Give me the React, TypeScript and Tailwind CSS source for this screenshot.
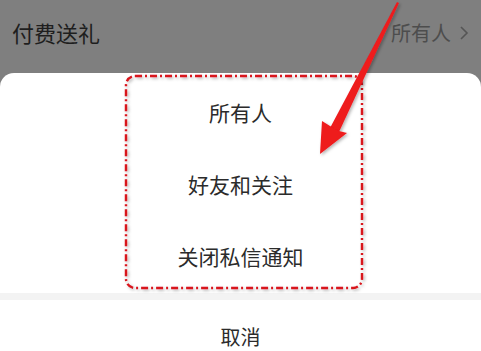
import React from 'react'

const font = { fontFamily: '"Noto Sans CJK SC", "Noto Sans", sans-serif' }

// ─── Annotation overlay: dash-dot box + arrow ───

function Annotation() {
  return (
    <svg
      className="absolute inset-0 pointer-events-none"
      width={481}
      height={351}
      viewBox="0 0 481 351"
    >
      <defs>
        <filter id="shadow" x="-20%" y="-20%" width="140%" height="140%">
          <feDropShadow dx="1.5" dy="1.5" stdDeviation="1.5" floodColor="#000" floodOpacity="0.3" />
        </filter>
      </defs>
      <rect
        x={126}
        y={76}
        width={236}
        height={212}
        rx={9}
        fill="none"
        stroke="#d8141c"
        strokeWidth={2.4}
        strokeDasharray="7 3 2 3"
        filter="url(#shadow)"
      />
      <g filter="url(#shadow)" fill="#ee1a1f">
        {/* tapered shaft */}
        <polygon points="397,2 399,3 339,132 330,128" />
        {/* head */}
        <polygon points="320,154 322,121 330,126 339,131 347,133" />
      </g>
    </svg>
  )
}

export default function App() {
  return (
    <div className="relative w-[481px] h-[351px] overflow-hidden bg-[#7f7f7f]" style={font}>
      {/* dimmed settings row */}
      <div className="h-[73px] flex items-center justify-between pl-3 pr-3 pb-2">
        <span className="text-[22px] text-[#1e1e1e]">付费送礼</span>
        <span className="flex items-center gap-2 text-[20px] text-[#4d4d4d]">
          所有人
          <svg width="10" height="16" viewBox="0 0 10 16" fill="none">
            <path d="M2 2l6 6-6 6" stroke="#555" strokeWidth="1.6" />
          </svg>
        </span>
      </div>

      {/* action sheet */}
      <div className="bg-white rounded-t-[14px] pt-1">
        {['所有人', '好友和关注', '关闭私信通知'].map(t => (
          <div key={t} className="h-[72px] flex items-center justify-center text-[21px] text-[#2b2b2b]">
            {t}
          </div>
        ))}
        <div className="h-[7px] bg-[#f3f3f3]" />
        <div className="h-[74px] flex items-center justify-center text-[20px] text-[#2b2b2b]">
          取消
        </div>
      </div>

      <Annotation />
    </div>
  )
}
